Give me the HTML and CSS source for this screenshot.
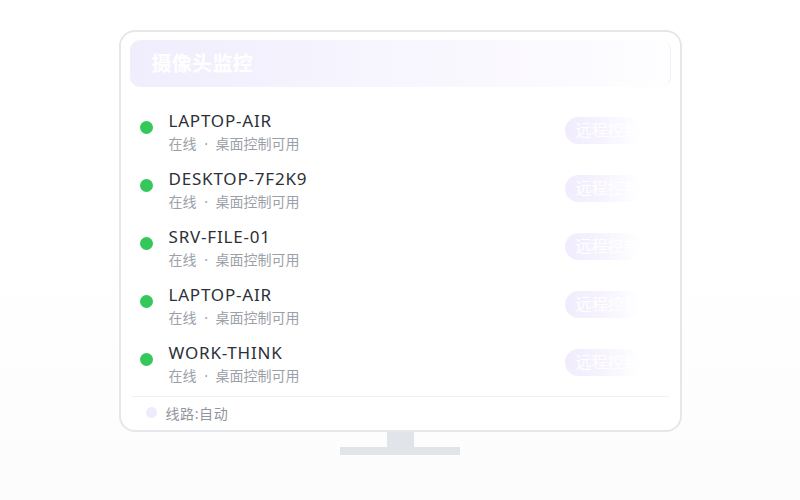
FILE: index.html
```html
<!DOCTYPE html>
<html lang="zh-CN">
<head>
<meta charset="utf-8">
<link rel="stylesheet" href="styles.css">
</head>
<body>
<div class="stage">
  <div class="monitor">
    <div class="screen">
      <div class="header"><span class="title">摄像头监控</span></div>
      <ul class="list">
        <li class="row">
          <span class="dot"></span>
          <div class="info"><div class="name">LAPTOP-AIR</div><div class="sub">在线 · 桌面控制可用</div></div>
          <span class="btn">远程控制</span>
        </li>
        <li class="row">
          <span class="dot"></span>
          <div class="info"><div class="name">DESKTOP-7F2K9</div><div class="sub">在线 · 桌面控制可用</div></div>
          <span class="btn">远程控制</span>
        </li>
        <li class="row">
          <span class="dot"></span>
          <div class="info"><div class="name">SRV-FILE-01</div><div class="sub">在线 · 桌面控制可用</div></div>
          <span class="btn">远程控制</span>
        </li>
        <li class="row">
          <span class="dot"></span>
          <div class="info"><div class="name">LAPTOP-AIR</div><div class="sub">在线 · 桌面控制可用</div></div>
          <span class="btn">远程控制</span>
        </li>
        <li class="row">
          <span class="dot"></span>
          <div class="info"><div class="name">WORK-THINK</div><div class="sub">在线 · 桌面控制可用</div></div>
          <span class="btn">远程控制</span>
        </li>
      </ul>
      <div class="footer"><span class="fdot"></span><span class="ftext">线路:自动</span></div>
    </div>
    <div class="neck"></div>
    <div class="base"></div>
  </div>
</div>
</body>
</html>
```
FILE: styles.css
```css
* { box-sizing: border-box; }
html, body { margin: 0; padding: 0; }
body {
  width: 800px;
  height: 500px;
  background: linear-gradient(180deg, #ffffff 0%, #ffffff 50%, #fcfcfd 100%);
  font-family: "Noto Sans", "Noto Sans CJK SC", sans-serif;
  overflow: hidden;
}
.stage {
  display: flex;
  justify-content: center;
  padding-top: 30px;
}
.monitor {
  display: flex;
  flex-direction: column;
  align-items: center;
}
.screen {
  width: 563px;
  height: 402px;
  border: 2px solid #e5e7eb;
  border-radius: 16px;
  background: #ffffff;
  padding: 8px 9px 0 9px;
  display: flex;
  flex-direction: column;
}
.header {
  height: 47px;
  border-radius: 10px;
  background: linear-gradient(90deg, #f0edfd 0%, #f7f5fe 45%, #fefdff 100%);
  border-right: 1px solid #f1f1f5;
  display: flex;
  align-items: center;
  padding-left: 22px;
}
.title {
  color: #ffffff;
  font-size: 20px;
  font-weight: 700;
  line-height: 26px;
  letter-spacing: 0.3px;
}
.list {
  list-style: none;
  margin: 23px 0 0 0;
  padding: 0;
  display: flex;
  flex-direction: column;
  gap: 14px;
}
.row {
  display: flex;
  align-items: flex-start;
  padding-left: 10px;
  height: 44px;
}
.dot {
  width: 13px;
  height: 13px;
  border-radius: 50%;
  background: #34c759;
  margin-top: 11px;
  flex: none;
}
.info {
  margin-left: 16px;
  flex: 1;
}
.name {
  font-size: 17px;
  line-height: 22px;
  color: #2c3037;
  letter-spacing: 0.8px;
}
.sub {
  font-size: 14px;
  line-height: 20px;
  margin-top: 2px;
  color: #9ca1a9;
  word-spacing: 4px;
}
.btn {
  margin-top: 7px;
  margin-right: 30px;
  width: 76px;
  height: 27px;
  border-radius: 14px;
  background: linear-gradient(90deg, #f0ecfd 0%, #f6f3fe 50%, #ffffff 100%);
  color: #ffffff;
  font-size: 16px;
  line-height: 27px;
  padding-left: 11px;
  white-space: nowrap;
  overflow: hidden;
  flex: none;
}
.footer {
  margin-top: 10px;
  border-top: 1px solid #eef0f3;
  margin-left: 2px;
  margin-right: 2px;
  display: flex;
  align-items: center;
  height: 32px;
  padding-left: 14px;
}
.fdot {
  width: 11px;
  height: 11px;
  border-radius: 50%;
  background: #efebfc;
  flex: none;
}
.ftext {
  margin-left: 9px;
  font-size: 14px;
  color: #91959d;
  letter-spacing: 0.6px;
}
.neck {
  width: 27px;
  height: 15px;
  background: #e1e4e8;
}
.base {
  width: 120px;
  height: 8px;
  background: #e1e4e8;
}
```
